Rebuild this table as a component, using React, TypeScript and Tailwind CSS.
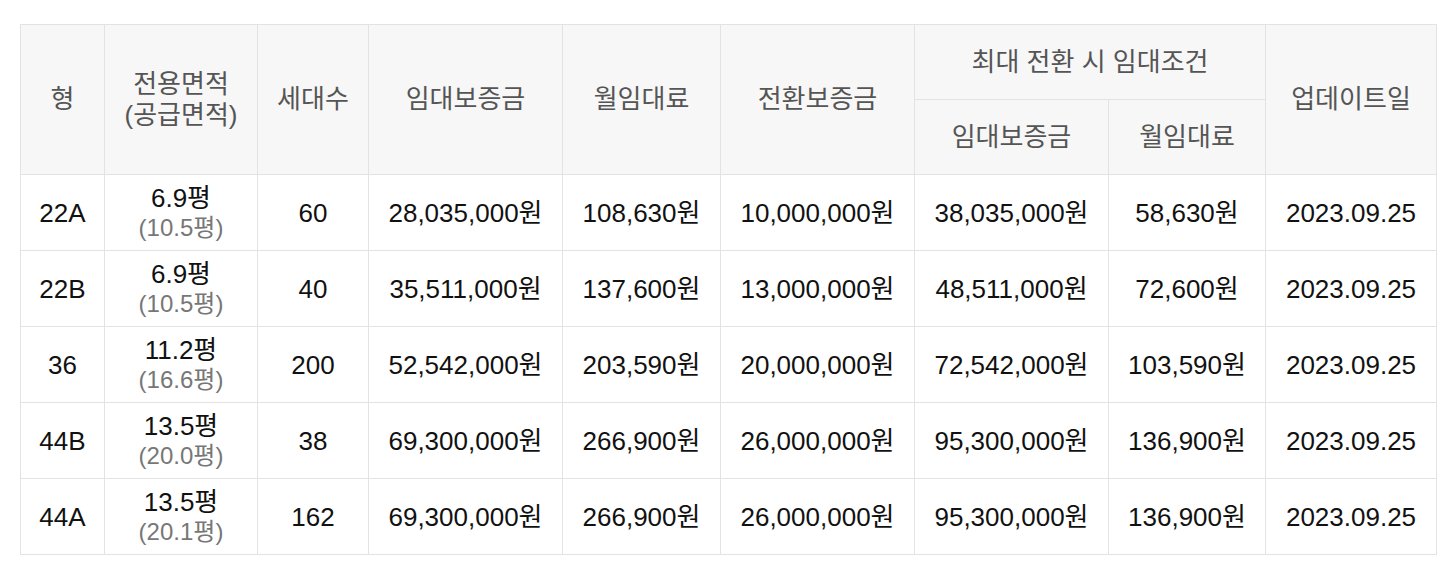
const rows = [
  { type: '22A', area: '6.9평', supply: '(10.5평)', units: '60', deposit: '28,035,000원', rent: '108,630원', conv: '10,000,000원', maxDeposit: '38,035,000원', maxRent: '58,630원', date: '2023.09.25' },
  { type: '22B', area: '6.9평', supply: '(10.5평)', units: '40', deposit: '35,511,000원', rent: '137,600원', conv: '13,000,000원', maxDeposit: '48,511,000원', maxRent: '72,600원', date: '2023.09.25' },
  { type: '36', area: '11.2평', supply: '(16.6평)', units: '200', deposit: '52,542,000원', rent: '203,590원', conv: '20,000,000원', maxDeposit: '72,542,000원', maxRent: '103,590원', date: '2023.09.25' },
  { type: '44B', area: '13.5평', supply: '(20.0평)', units: '38', deposit: '69,300,000원', rent: '266,900원', conv: '26,000,000원', maxDeposit: '95,300,000원', maxRent: '136,900원', date: '2023.09.25' },
  { type: '44A', area: '13.5평', supply: '(20.1평)', units: '162', deposit: '69,300,000원', rent: '266,900원', conv: '26,000,000원', maxDeposit: '95,300,000원', maxRent: '136,900원', date: '2023.09.25' },
];

const th = 'border border-[#e3e3e3] bg-[#f7f7f7] font-normal text-[#555] text-[26px] leading-[31px] align-middle text-center';
const td = 'border border-[#e3e3e3] text-[#111] text-[26px] leading-[30px] align-middle text-center';

export default function App() {
  return (
    <div
      className="bg-white min-h-[571px] pt-[24px] pl-[20px]"
      style={{ fontFamily: '"Liberation Sans", Arial, "Noto Sans CJK KR", sans-serif' }}
    >
      <table className="table-fixed border-collapse w-[1416px] border border-[#d8d8d8]">
        <colgroup>
          <col className="w-[84px]" />
          <col className="w-[153px]" />
          <col className="w-[111px]" />
          <col className="w-[194px]" />
          <col className="w-[158px]" />
          <col className="w-[194px]" />
          <col className="w-[194px]" />
          <col className="w-[157px]" />
          <col className="w-[171px]" />
        </colgroup>
        <thead>
          <tr className="h-[75px]">
            <th rowSpan={2} className={th}>형</th>
            <th rowSpan={2} className={th}>
              전용면적
              <br />
              (공급면적)
            </th>
            <th rowSpan={2} className={th}>세대수</th>
            <th rowSpan={2} className={th}>임대보증금</th>
            <th rowSpan={2} className={th}>월임대료</th>
            <th rowSpan={2} className={th}>전환보증금</th>
            <th colSpan={2} className={th}>최대 전환 시 임대조건</th>
            <th rowSpan={2} className={th}>업데이트일</th>
          </tr>
          <tr className="h-[75px]">
            <th className={th}>임대보증금</th>
            <th className={th}>월임대료</th>
          </tr>
        </thead>
        <tbody>
          {rows.map((r) => (
            <tr key={r.type} className="h-[76px]">
              <td className={td}>{r.type}</td>
              <td className={td}>
                <div>{r.area}</div>
                <div className="text-[24px] text-[#777]">{r.supply}</div>
              </td>
              <td className={td}>{r.units}</td>
              <td className={td}>{r.deposit}</td>
              <td className={td}>{r.rent}</td>
              <td className={td}>{r.conv}</td>
              <td className={td}>{r.maxDeposit}</td>
              <td className={td}>{r.maxRent}</td>
              <td className={td}>{r.date}</td>
            </tr>
          ))}
        </tbody>
      </table>
    </div>
  );
}
